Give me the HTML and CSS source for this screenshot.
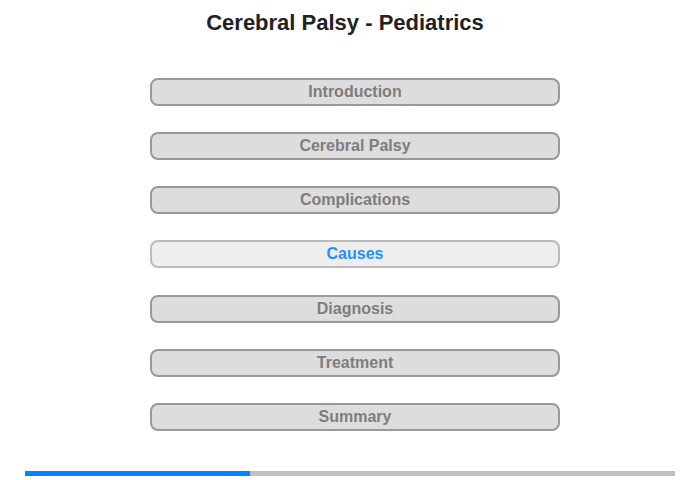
FILE: index.html
```html
<!DOCTYPE html>
<html>
<head>
<meta charset="utf-8">
<link rel="stylesheet" href="styles.css">
</head>
<body>
<div class="page">
  <h1 class="title">Cerebral Palsy - Pediatrics</h1>
  <nav class="menu">
    <div class="item">Introduction</div>
    <div class="item">Cerebral Palsy</div>
    <div class="item">Complications</div>
    <div class="item active">Causes</div>
    <div class="item">Diagnosis</div>
    <div class="item">Treatment</div>
    <div class="item">Summary</div>
  </nav>
  <div class="progress"><div class="fill" style="width:34.6%"></div></div>
</div>
</body>
</html>
```
FILE: styles.css
```css
html, body { margin: 0; padding: 0; background: #fff; }
body { font-family: "Liberation Sans", Arial, sans-serif; }
.page { width: 700px; height: 480px; display: flex; flex-direction: column; align-items: center; overflow: hidden; }
.title { margin: 11px 10px 0 0; font-size: 22px; line-height: 24px; font-weight: bold; color: #222; }
.menu { margin: 42.9px 0 0 10px; display: flex; flex-direction: column; gap: 26.17px; }
.item { box-sizing: border-box; width: 410px; height: 28px; border: 2px solid #999; border-radius: 8px; background: #ddd; color: #7d7d7d; font-weight: bold; font-size: 16px; line-height: 24px; text-align: center; }
.item.active { background: #eee; border-color: #bbb; color: #1e90ff; }
.progress { margin-top: 40px; width: 650px; height: 5px; background: #c0c0c0; }
.fill { height: 100%; background: #0084ff; }
```
